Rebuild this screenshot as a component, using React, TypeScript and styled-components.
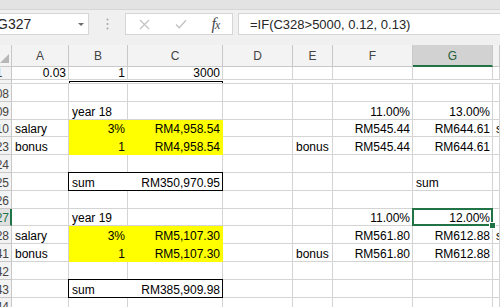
import React from "react";
import styled, { createGlobalStyle } from "styled-components";

const GRID = "#d4d4d4";
const HEAD_LINE = "#c8c8c8";
const GREEN = "#217346";
const YELLOW = "#ffff00";
const COLS = "12px 57px 59px 95px 70px 40px 80px 80px 1fr";

const GlobalStyle = createGlobalStyle`
  html, body {
    margin: 0;
    padding: 0;
    background: #ffffff;
  }
  body {
    font-family: "Liberation Sans", Arial, sans-serif;
    overflow: hidden;
  }
`;

const Window = styled.div`
  width: 500px;
  height: 307px;
  overflow: hidden;
  display: flex;
  flex-direction: column;
  background: #ffffff;

  & > * {
    flex-shrink: 0;
  }
`;

const Ribbon = styled.div`
  height: 9px;
  background: #e3e3e3;
  border-bottom: 1px solid #d6d6d6;
`;

const FormulaBar = styled.div`
  height: 35px;
  background: #f0f0f0;
  display: flex;
  align-items: flex-start;
  padding-top: 3px;
  box-sizing: border-box;
`;

const NameBox = styled.div`
  width: 93px;
  height: 22px;
  margin-left: -4px;
  box-sizing: border-box;
  background: #ffffff;
  border: 1px solid #d6d6d6;
  display: flex;
  align-items: center;
  justify-content: space-between;
  padding: 0 4px 0 0;
  font-size: 14px;
  color: #262626;
`;

const Caret = styled.span`
  width: 0;
  height: 0;
  border-left: 3px solid transparent;
  border-right: 3px solid transparent;
  border-top: 3px solid #6d6d6d;
  margin-top: 1px;
`;

const Grip = styled.div`
  width: 36px;
  height: 22px;
  display: flex;
  align-items: center;
  justify-content: center;
`;

const ButtonBox = styled.div`
  width: 108px;
  height: 22px;
  box-sizing: border-box;
  background: #ffffff;
  border: 1px solid #d6d6d6;
  display: grid;
  grid-template-columns: 36px 37px 1fr;
  align-items: center;
  justify-items: center;
`;

const Fx = styled.span`
  font-family: "Liberation Serif", "Times New Roman", serif;
  font-style: italic;
  font-size: 16px;
  color: #4a4a4a;
  letter-spacing: -1px;

  & small {
    font-size: 12px;
  }
`;

const FormulaInput = styled.div`
  flex: 1;
  height: 22px;
  margin-left: 5px;
  box-sizing: border-box;
  background: #ffffff;
  border: 1px solid #d6d6d6;
  border-right: none;
  display: flex;
  align-items: center;
  padding-left: 11px;
  font-size: 13px;
  color: #262626;
  white-space: nowrap;
`;

const Row = styled.div<{ $h: number }>`
  display: grid;
  grid-template-columns: ${COLS};
  height: ${(p) => p.$h}px;
`;

const HeadRow = styled(Row)`
  background: #f3f3f3;
`;

const TopRow = styled(Row)`
  & > div {
    line-height: 12px;
  }
`;

const Corner = styled.div`
  position: relative;
  border-right: 1px solid ${HEAD_LINE};
  border-bottom: 1px solid ${HEAD_LINE};
  display: flex;
  align-items: flex-end;
  justify-content: flex-end;
  padding: 0 2px 3px 0;
`;

const CornerMark = styled.span`
  width: 0;
  height: 0;
  border-left: 9px solid transparent;
  border-bottom: 9px solid #b7b7b7;
`;

const ColHead = styled.div<{ $sel?: boolean }>`
  box-sizing: border-box;
  border-right: 1px solid ${HEAD_LINE};
  border-bottom: ${(p) => (p.$sel ? `2px solid ${GREEN}` : `1px solid ${HEAD_LINE}`)};
  background: ${(p) => (p.$sel ? "#d2d2d2" : "#f3f3f3")};
  color: ${(p) => (p.$sel ? "#1e5e38" : "#444444")};
  font-size: 12px;
  display: flex;
  align-items: center;
  justify-content: center;
  padding-top: ${(p) => (p.$sel ? "1px" : "0")};
`;

const RowHead = styled.div<{ $sel?: boolean }>`
  box-sizing: border-box;
  overflow: hidden;
  display: flex;
  align-items: flex-end;
  background: ${(p) => (p.$sel ? "#e1e1e1" : "#f3f3f3")};
  color: ${(p) => (p.$sel ? GREEN : "#444444")};
  border-right: ${(p) => (p.$sel ? `2px solid ${GREEN}` : `1px solid ${HEAD_LINE}`)};
  border-bottom: 1px solid ${HEAD_LINE};
  font-size: 12px;
  line-height: 14px;
`;

const RowLabel = styled.span`
  flex: 0 0 22px;
  margin-left: -12px;
  text-align: center;
`;

const Cell = styled.div<{ $right?: boolean; $fill?: boolean }>`
  box-sizing: border-box;
  position: relative;
  display: flex;
  align-items: flex-end;
  justify-content: ${(p) => (p.$right ? "flex-end" : "flex-start")};
  padding: 0 2px 0 3px;
  white-space: nowrap;
  overflow: hidden;
  font-size: 12px;
  line-height: 14px;
  color: #000000;
  background: ${(p) => (p.$fill ? YELLOW : "#ffffff")};
  border-right: 1px solid ${(p) => (p.$fill ? YELLOW : GRID)};
  border-bottom: 1px solid ${(p) => (p.$fill ? YELLOW : GRID)};
`;

const ActiveCell = styled(Cell)`
  overflow: visible;
  z-index: 2;

  &::after {
    content: "";
    position: absolute;
    top: -1px;
    left: -1px;
    right: -1px;
    bottom: -1px;
    border: 2px solid ${GREEN};
    pointer-events: none;
  }

  &::before {
    content: "";
    position: absolute;
    right: -4px;
    bottom: -4px;
    width: 5px;
    height: 5px;
    background: ${GREEN};
    border: 1px solid #ffffff;
    z-index: 3;
  }
`;

const SumBox = styled.div`
  grid-column: span 2;
  position: relative;
  display: flex;
  align-items: flex-end;
  justify-content: space-between;
  padding: 0 2px 0 3px;
  font-size: 12px;
  line-height: 14px;
  color: #000000;
  border-bottom: 1px solid ${GRID};
  border-right: 1px solid ${GRID};

  &::after {
    content: "";
    position: absolute;
    top: -1px;
    left: -1px;
    right: -1px;
    bottom: -1px;
    border: 1px solid #000000;
    pointer-events: none;
  }
`;

const FreezeRow = styled(Row)`
  border-bottom: 1px solid ${GRID};
  box-sizing: border-box;
`;

const FreezeHead = styled.div`
  background: #f3f3f3;
  border-right: 1px solid ${HEAD_LINE};
`;

const FreezeEdge = styled.div`
  grid-column: span 2;
  margin-top: 1px;
  height: 2px;
  box-sizing: border-box;
  border: 1px solid #000000;
  border-bottom: none;
`;

type CellDef = {
  t?: string;
  r?: boolean;
  fill?: boolean;
  active?: boolean;
  sum?: [string, string];
};

type RowDef = { label: string; sel?: boolean; cells: CellDef[] };

const empty = (): CellDef[] => Array.from({ length: 8 }, () => ({}));

const rows: RowDef[] = [
  { label: "308", cells: empty() },
  {
    label: "309",
    cells: [{}, { t: "year 18" }, {}, {}, {}, { t: "11.00%", r: true }, { t: "13.00%", r: true }, {}],
  },
  {
    label: "310",
    cells: [
      { t: "salary" },
      { t: "3%", r: true, fill: true },
      { t: "RM4,958.54", r: true, fill: true },
      {},
      {},
      { t: "RM545.44", r: true },
      { t: "RM644.61", r: true },
      { t: "s" },
    ],
  },
  {
    label: "323",
    cells: [
      { t: "bonus" },
      { t: "1", r: true, fill: true },
      { t: "RM4,958.54", r: true, fill: true },
      {},
      { t: "bonus" },
      { t: "RM545.44", r: true },
      { t: "RM644.61", r: true },
      {},
    ],
  },
  { label: "324", cells: empty() },
  {
    label: "325",
    cells: [{}, { sum: ["sum", "RM350,970.95"] }, {}, {}, {}, { t: "sum" }, {}],
  },
  { label: "326", cells: empty() },
  {
    label: "327",
    sel: true,
    cells: [
      {},
      { t: "year 19" },
      {},
      {},
      {},
      { t: "11.00%", r: true },
      { t: "12.00%", r: true, active: true },
      {},
    ],
  },
  {
    label: "328",
    cells: [
      { t: "salary" },
      { t: "3%", r: true, fill: true },
      { t: "RM5,107.30", r: true, fill: true },
      {},
      {},
      { t: "RM561.80", r: true },
      { t: "RM612.88", r: true },
      { t: "s" },
    ],
  },
  {
    label: "341",
    cells: [
      { t: "bonus" },
      { t: "1", r: true, fill: true },
      { t: "RM5,107.30", r: true, fill: true },
      {},
      { t: "bonus" },
      { t: "RM561.80", r: true },
      { t: "RM612.88", r: true },
      {},
    ],
  },
  { label: "342", cells: empty() },
  {
    label: "343",
    cells: [{}, { sum: ["sum", "RM385,909.98"] }, {}, {}, {}, {}, {}],
  },
  { label: "344", cells: empty() },
];

const columns = ["A", "B", "C", "D", "E", "F", "G", ""];

function SheetCell({ c }: { c: CellDef }) {
  if (c.sum) {
    return (
      <SumBox>
        <span>{c.sum[0]}</span>
        <span>{c.sum[1]}</span>
      </SumBox>
    );
  }
  if (c.active) {
    return (
      <ActiveCell $right={c.r} $fill={c.fill}>
        {c.t}
      </ActiveCell>
    );
  }
  return (
    <Cell $right={c.r} $fill={c.fill}>
      {c.t}
    </Cell>
  );
}

export default function App() {
  return (
    <Window>
      <GlobalStyle />
      <Ribbon />
      <FormulaBar>
        <NameBox>
          <span>G327</span>
          <Caret />
        </NameBox>
        <Grip>
          <svg width="3" height="12" viewBox="0 0 3 12">
            <circle cx="1.5" cy="1.5" r="1" fill="#a6a6a6" />
            <circle cx="1.5" cy="6" r="1" fill="#a6a6a6" />
            <circle cx="1.5" cy="10.5" r="1" fill="#a6a6a6" />
          </svg>
        </Grip>
        <ButtonBox>
          <svg width="11" height="11" viewBox="0 0 11 11">
            <path d="M1 1 L10 10 M10 1 L1 10" stroke="#c2c2c2" strokeWidth="1.2" fill="none" />
          </svg>
          <svg width="12" height="10" viewBox="0 0 12 10">
            <path d="M1 5.5 L4.3 8.8 L11 1.2" stroke="#c2c2c2" strokeWidth="1.3" fill="none" />
          </svg>
          <Fx>
            f<small>x</small>
          </Fx>
        </ButtonBox>
        <FormulaInput>=IF(C328&gt;5000, 0.12, 0.13)</FormulaInput>
      </FormulaBar>

      <HeadRow $h={22}>
        <Corner>
          <CornerMark />
        </Corner>
        {columns.map((c, i) => (
          <ColHead key={i} $sel={c === "G"}>
            {c}
          </ColHead>
        ))}
      </HeadRow>

      <TopRow $h={13}>
        <RowHead>
          <RowLabel>1</RowLabel>
        </RowHead>
        <Cell $right>0.03</Cell>
        <Cell $right>1</Cell>
        <Cell $right>3000</Cell>
        <Cell />
        <Cell />
        <Cell />
        <Cell />
        <Cell />
      </TopRow>

      <FreezeRow $h={4}>
        <FreezeHead />
        <div />
        <FreezeEdge />
      </FreezeRow>

      {rows.map((r) => (
        <Row key={r.label} $h={17.8}>
          <RowHead $sel={r.sel}>
            <RowLabel>{r.label}</RowLabel>
          </RowHead>
          {r.cells.map((c, i) => (
            <SheetCell key={i} c={c} />
          ))}
        </Row>
      ))}
    </Window>
  );
}
